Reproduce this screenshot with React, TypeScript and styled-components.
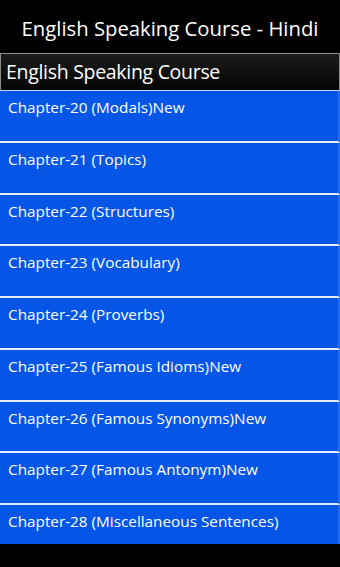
import styled, { createGlobalStyle } from 'styled-components';

const chapters = [
  'Chapter-20 (Modals)New',
  'Chapter-21 (Topics)',
  'Chapter-22 (Structures)',
  'Chapter-23 (Vocabulary)',
  'Chapter-24 (Proverbs)',
  'Chapter-25 (Famous Idioms)New',
  'Chapter-26 (Famous Synonyms)New',
  'Chapter-27 (Famous Antonym)New',
  'Chapter-28 (Miscellaneous Sentences)',
];

const GlobalStyle = createGlobalStyle`
  html, body {
    margin: 0;
    padding: 0;
    background: #000;
  }
  * {
    box-sizing: border-box;
  }
`;

const App = () => {
  return (
    <>
      <GlobalStyle />
      <Screen>
        <TitleBar>English Speaking Course - Hindi</TitleBar>
        <SectionHeader>English Speaking Course</SectionHeader>
        <List>
          {chapters.map((chapter) => (
            <Item key={chapter}>{chapter}</Item>
          ))}
        </List>
        <AppBar />
      </Screen>
    </>
  );
};

export default App;

const Screen = styled.div`
  width: 340px;
  height: 567px;
  display: flex;
  flex-direction: column;
  overflow: hidden;

  background: #000;
  color: #fff;
  font-family: 'Open Sans', 'Noto Sans', sans-serif;
`;
const TitleBar = styled.div`
  height: 53px;
  display: flex;
  justify-content: center;
  align-items: center;

  padding-top: 2px;
  font-size: 20.3px;
`;
const SectionHeader = styled.div`
  height: 38px;
  display: flex;
  align-items: center;

  padding: 0 5px 2px;
  font-size: 19.5px;
  letter-spacing: -0.3px;

  border: 1px solid #8c8c8c;
  border-bottom: 1px solid #c9d3e6;
  background: linear-gradient(#1c1c1c, #050505);
`;
const List = styled.div`
  flex: 1;
  display: flex;
  flex-direction: column;
  overflow: hidden;
`;
const Item = styled.div`
  flex: 0 0 51.75px;
  padding: 6px 8px 0;

  font-size: 15.3px;
  line-height: 20px;

  background: #0556e6;
  border-right: 2px solid #2a6cf0;
  border-bottom: 2px solid #e4ebfa;
`;
const AppBar = styled.div`
  flex: 0 0 23px;
  background: #000;
`;
